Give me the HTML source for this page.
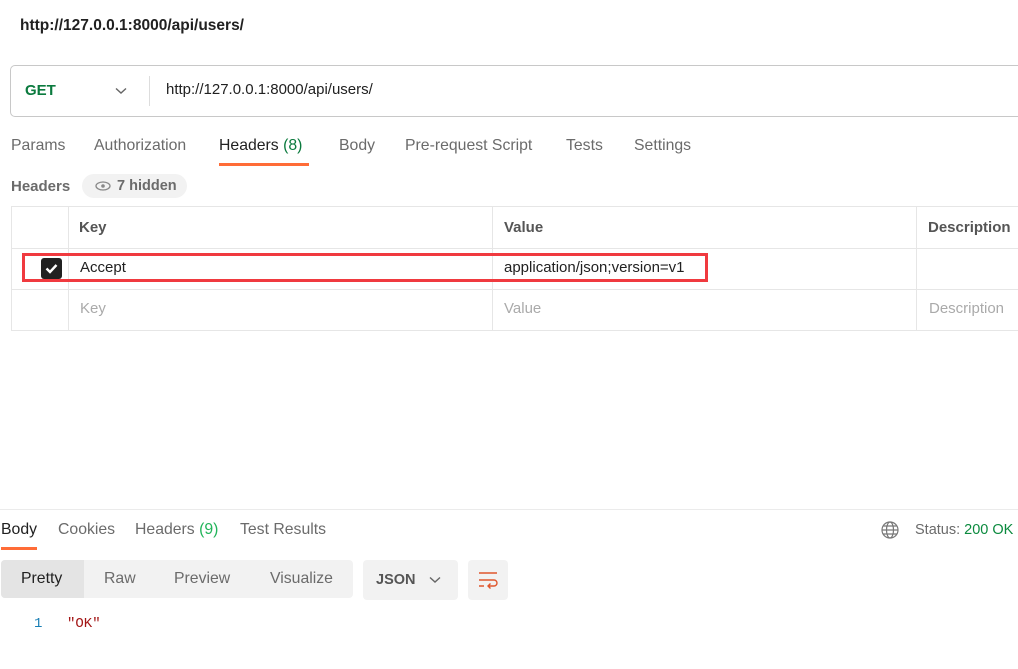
<!DOCTYPE html>
<html><head><meta charset="utf-8"><style>
*{margin:0;padding:0;box-sizing:border-box}
body{width:1018px;height:669px;overflow:hidden;background:#fff;font-family:"Liberation Sans",Arial,sans-serif;font-size:15px;color:#212121;position:relative}
.a{position:absolute;white-space:nowrap}
.g{color:#6b6b6b}
.t{font-size:15.8px}
</style></head><body>
<div class="a" style="left:20px;top:17px;font-weight:bold;font-size:15.5px;color:#212121">http://127.0.0.1:8000/api/users/</div>
<div class="a" style="left:10px;top:65px;width:1030px;height:52px;border:1px solid #c8c8c8;border-radius:5px"></div>
<div class="a" style="left:25px;top:82px;font-weight:bold;color:#0b7a3e;font-size:15px">GET</div>
<svg class="a" style="left:115px;top:87px" width="12" height="8"><path d="M1 1.5L6 6L11 1.5" stroke="#666" stroke-width="1.4" fill="none"/></svg>
<div class="a" style="left:149px;top:76px;width:1px;height:30px;background:#ddd"></div>
<div class="a" style="left:166px;top:81px">http://127.0.0.1:8000/api/users/</div>

<div class="a g t" style="left:11px;top:137px">Params</div>
<div class="a g t" style="left:94px;top:137px">Authorization</div>
<div class="a t" style="left:219px;top:137px">Headers <span style="color:#0b7a3e">(8)</span></div>
<div class="a" style="left:219px;top:163px;width:90px;height:3px;background:#ff6c37"></div>
<div class="a g t" style="left:339px;top:137px">Body</div>
<div class="a g t" style="left:405px;top:137px">Pre-request Script</div>
<div class="a g t" style="left:566px;top:137px">Tests</div>
<div class="a g t" style="left:634px;top:137px">Settings</div>

<div class="a" style="left:11px;top:178px;font-weight:bold;color:#6b6b6b">Headers</div>
<div class="a" style="left:82px;top:174px;width:105px;height:24px;border-radius:12px;background:#f2f2f2"></div>
<svg class="a" style="left:95px;top:181px" width="16" height="10"><ellipse cx="8" cy="5" rx="7" ry="4" fill="none" stroke="#888" stroke-width="1.3"/><circle cx="8" cy="5" r="1.8" fill="#888"/></svg>
<div class="a" style="left:117px;top:178px;font-weight:bold;color:#6b6b6b;font-size:14.5px">7 hidden</div>

<div class="a" style="left:11px;top:206px;width:1020px;height:125px;border:1px solid #e6e6e6"></div>
<div class="a" style="left:11px;top:248px;width:1010px;height:1px;background:#e6e6e6"></div>
<div class="a" style="left:11px;top:289px;width:1010px;height:1px;background:#e6e6e6"></div>
<div class="a" style="left:68px;top:206px;width:1px;height:124px;background:#e6e6e6"></div>
<div class="a" style="left:492px;top:206px;width:1px;height:124px;background:#e6e6e6"></div>
<div class="a" style="left:916px;top:206px;width:1px;height:124px;background:#e6e6e6"></div>
<div class="a" style="left:79px;top:219px;font-weight:bold;color:#555">Key</div>
<div class="a" style="left:504px;top:219px;font-weight:bold;color:#555">Value</div>
<div class="a" style="left:928px;top:219px;font-weight:bold;color:#555">Description</div>
<div class="a" style="left:41px;top:258px;width:21px;height:21px;border-radius:3px;background:#212121"></div>
<svg class="a" style="left:41px;top:258px" width="21" height="21"><path d="M5.5 10.5L9 14L15.5 7" stroke="#fff" stroke-width="2.4" fill="none"/></svg>
<div class="a" style="left:80px;top:259px">Accept</div>
<div class="a" style="left:504px;top:259px">application/json;version=v1</div>
<div class="a" style="left:22px;top:253px;width:686px;height:29px;border:3px solid #f03a3f"></div>
<div class="a" style="left:80px;top:300px;color:#aaa">Key</div>
<div class="a" style="left:504px;top:300px;color:#aaa">Value</div>
<div class="a" style="left:929px;top:300px;color:#aaa">Description</div>

<div class="a" style="left:0;top:509px;width:1018px;height:1px;background:#ebebeb"></div>
<div class="a t" style="left:1px;top:521px">Body</div>
<div class="a" style="left:1px;top:547px;width:36px;height:3px;background:#ff6c37"></div>
<div class="a g t" style="left:58px;top:521px">Cookies</div>
<div class="a g t" style="left:135px;top:521px">Headers <span style="color:#22b45a">(9)</span></div>
<div class="a g t" style="left:240px;top:521px">Test Results</div>
<svg class="a" style="left:880px;top:520px" width="20" height="20" fill="none" stroke="#777" stroke-width="1.2"><circle cx="10" cy="10" r="8"/><ellipse cx="10" cy="10" rx="3.5" ry="8"/><path d="M2 10H18M3.5 6H16.5M3.5 14H16.5"/></svg>
<div class="a g" style="left:915px;top:522px;font-size:14.5px">Status: <span style="color:#0b8a3e">200 OK</span></div>

<div class="a" style="left:1px;top:560px;width:352px;height:38px;border-radius:4px;background:#f2f2f2"></div>
<div class="a" style="left:1px;top:560px;width:83px;height:38px;border-radius:4px 0 0 4px;background:#e4e4e4"></div>
<div class="a t" style="left:21px;top:570px">Pretty</div>
<div class="a g t" style="left:104px;top:570px">Raw</div>
<div class="a g t" style="left:174px;top:570px">Preview</div>
<div class="a g t" style="left:270px;top:570px">Visualize</div>
<div class="a" style="left:363px;top:560px;width:95px;height:40px;border-radius:4px;background:#f2f2f2"></div>
<div class="a" style="left:376px;top:572px;font-weight:bold;color:#555;font-size:14.5px">JSON</div>
<svg class="a" style="left:429px;top:576px" width="12" height="8"><path d="M1 1.5L6 6L11 1.5" stroke="#666" stroke-width="1.4" fill="none"/></svg>
<div class="a" style="left:468px;top:560px;width:40px;height:40px;border-radius:4px;background:#f2f2f2"></div>
<svg class="a" style="left:478px;top:571px" width="20" height="18" fill="none" stroke="#e0562d" stroke-width="1.4"><path d="M1 2H19M1 9H16a3 3 0 0 1 0 6H10M12.5 12.5L10 15L12.5 17.5M1 15H6"/></svg>

<div class="a" style="left:34px;top:616px;color:#1a7fb5;font-family:'Liberation Mono',monospace;font-size:14px">1</div>
<div class="a" style="left:67px;top:616px;color:#a31515;font-family:'Liberation Mono',monospace;font-size:14px">"OK"</div>
</body></html>
